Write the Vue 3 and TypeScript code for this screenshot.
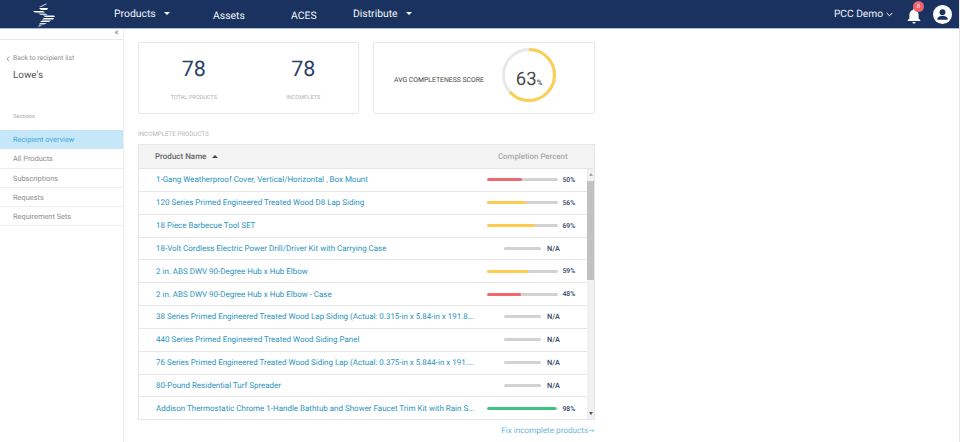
<script setup lang="ts">
interface Row { name: string; pct: number | null; color?: string }
const red = '#f0686f', yellow = '#fdcb4d', green = '#3fc380'
const rows: Row[] = [
  { name: '1-Gang Weatherproof Cover, Vertical/Horizontal , Box Mount', pct: 50, color: red },
  { name: '120 Series Primed Engineered Treated Wood D8 Lap Siding', pct: 56, color: yellow },
  { name: '18 Piece Barbecue Tool SET', pct: 69, color: yellow },
  { name: '18-Volt Cordless Electric Power Drill/Driver Kit with Carrying Case', pct: null },
  { name: '2 in. ABS DWV 90-Degree Hub x Hub Elbow', pct: 59, color: yellow },
  { name: '2 in. ABS DWV 90-Degree Hub x Hub Elbow - Case', pct: 48, color: red },
  { name: '38 Series Primed Engineered Treated Wood Lap Siding (Actual: 0.315-in x 5.84-in x 191.8...', pct: null },
  { name: '440 Series Primed Engineered Treated Wood Siding Panel', pct: null },
  { name: '76 Series Primed Engineered Treated Wood Siding Lap (Actual: 0.375-in x 5.844-in x 191....', pct: null },
  { name: '80-Pound Residential Turf Spreader', pct: null },
  { name: 'Addison Thermostatic Chrome 1-Handle Bathtub and Shower Faucet Trim Kit with Rain S...', pct: 98, color: green },
]
const sections = ['Recipient overview', 'All Products', 'Subscriptions', 'Requests', 'Requirement Sets']
const r = 25.5
const circ = 2 * Math.PI * r
</script>

<template>
  <div class="page">
    <header class="topbar">
      <div class="logo">
        <svg width="24" height="26" viewBox="0 0 24 26">
          <g fill="#fff">
            <path d="M14 2.500 15 3 9 6 7 6Z" opacity=".85"/>
            <path d="M7 7h9l-1 2H9Z"/>
            <path d="M1 10h10l2 1.500H3Z"/>
            <path d="M6 12.500h7l3 1.500H9Z" opacity=".8"/>
            <path d="M11 14.500h11l1 1.500H13Z"/>
            <path d="M12 17h10l-1 1.500H10Z"/>
            <path d="M10 19.500h9l-2 1.500H8Z"/>
            <path d="M8 22h7l-3 1.500H7Z" opacity=".85"/>
            <path d="M7 24.300h3L8 25.500H6Z" opacity=".8"/>
          </g>
        </svg>
      </div>
      <nav class="nav">
        <a class="nav-item products">Products <i class="caret"></i></a>
        <a class="nav-item low assets">Assets</a>
        <a class="nav-item low aces">ACES</a>
        <a class="nav-item distribute">Distribute <i class="caret"></i></a>
      </nav>
      <div class="right">
        <span class="account">PCC Demo
          <svg width="7" height="5" viewBox="0 0 7 5"><path d="M.7 1 3.500 3.800 6.300 1" fill="none" stroke="#fff" stroke-width="1"/></svg>
        </span>
        <span class="bell">
          <svg width="14" height="17" viewBox="0 0 14 17"><path fill="#fff" d="M7 1.500a1 1 0 0 1 1 1v.6c2.300.5 3.600 2.400 3.600 4.700v3.700L13.300 13.200v.8H.7v-.8l1.700-1.700V7.800c0-2.300 1.300-4.200 3.600-4.700v-.6a1 1 0 0 1 1-1ZM5.400 15h3.200a1.600 1.600 0 0 1-3.200 0Z"/></svg>
          <b class="badge">8</b>
        </span>
        <span class="avatar">
          <svg width="19" height="19" viewBox="0 0 24 24"><circle cx="12" cy="12" r="12" fill="#fff"/><circle cx="12" cy="9" r="3.700" fill="#19325f"/><path fill="#19325f" d="M5.500 17.500c0-2.600 4.300-3.900 6.500-3.900s6.500 1.300 6.500 3.900v1H5.500Z"/></svg>
        </span>
      </div>
    </header>

    <div class="body">
      <aside class="sidebar">
        <div class="collapse">«</div>
        <a class="back"><svg width="4" height="6" viewBox="0 0 4 6"><path d="M3.300.6 1 3l2.300 2.400" fill="none" stroke="#888" stroke-width=".8"/></svg>Back to recipient list</a>
        <h1 class="title">Lowe's</h1>
        <div class="sec-label">Sections</div>
        <ul class="menu">
          <li v-for="(s, i) in sections" :key="s" :class="{ active: i === 0 }">{{ s }}</li>
        </ul>
      </aside>

      <main class="main">
        <section class="cards">
          <div class="card stats">
            <div class="stat">
              <div class="num">78</div>
              <div class="cap">TOTAL PRODUCTS</div>
            </div>
            <div class="stat">
              <div class="num">78</div>
              <div class="cap">INCOMPLETE</div>
            </div>
          </div>
          <div class="card score">
            <span class="score-label">AVG COMPLETENESS SCORE</span>
            <div class="ring">
              <svg width="54" height="54" viewBox="0 0 54 54">
                <circle cx="27" cy="27" :r="r" fill="none" stroke="#e8e8e8" stroke-width="3"/>
                <circle cx="27" cy="27" :r="r" fill="none" stroke="#fdcf50" stroke-width="3"
                  :stroke-dasharray="`${circ * 0.63} ${circ}`" transform="rotate(-90 27 27)"/>
              </svg>
              <span class="ring-text">63<small>%</small></span>
            </div>
          </div>
        </section>

        <h2 class="tbl-title">INCOMPLETE PRODUCTS</h2>

        <section class="table">
          <div class="thead">
            <div class="th-name">Product Name <i class="sort"></i></div>
            <div class="th-pct">Completion Percent</div>
          </div>
          <div class="tbody">
            <div class="rows">
              <div v-for="row in rows" :key="row.name" class="row">
                <a class="name">{{ row.name }}</a>
                <div class="pct">
                  <template v-if="row.pct !== null">
                    <div class="bar"><div class="fill" :style="{ width: row.pct + '%', background: row.color }"></div></div>
                    <span class="val">{{ row.pct }}%</span>
                  </template>
                  <template v-else>
                    <div class="bar short"></div>
                    <span class="val na">N/A</span>
                  </template>
                </div>
              </div>
            </div>
            <div class="scroll">
              <i class="arrow up"></i>
              <div class="thumb"></div>
              <i class="arrow down"></i>
            </div>
          </div>
        </section>

        <div class="fix"><a>Fix incomplete products<span class="fix-arrow">→</span></a></div>
      </main>
    </div>
  </div>
</template>

<style>
html, body { margin: 0; background: #fff; }
</style>

<style scoped>
.page {
  width: 960px;
  height: 442px;
  overflow: hidden;
  display: flex;
  flex-direction: column;
  font-family: Roboto, "Liberation Sans", sans-serif;
  text-rendering: geometricPrecision;
  color: #333;
  box-sizing: border-box;
  border-right: 1px solid #e6e6e6;
}
.topbar {
  flex: 0 0 29px;
  height: 29px;
  box-sizing: border-box;
  background: #19325f;
  border-bottom: 1px solid #a9bcd8;
  display: flex;
  align-items: center;
  color: #fff;
}
.logo { width: 114px; padding-left: 32px; box-sizing: border-box; display: flex; height: 28px; align-items: center; }
.nav { display: flex; align-items: center; font-size: 10.400px; }
.nav-item { color: #f2f4f8; white-space: nowrap; display: flex; align-items: center; position: relative; top: -1px; }
.nav-item.low { top: 1px; }
.products { width: 99px; }
.assets { width: 78px; }
.aces { width: 62px; }
.caret { display: inline-block; margin-left: 8px; border-left: 3.500px solid transparent; border-right: 3.500px solid transparent; border-top: 3.500px solid #fff; }
.right { margin-left: auto; display: flex; align-items: center; padding-right: 7px; }
.account { font-size: 10.200px; display: flex; align-items: center; gap: 3px; color: #eef1f6; }
.bell { margin-left: 13.500px; position: relative; width: 14px; height: 17px; display: block; top: 1px; }
.badge { position: absolute; top: -6px; left: 6.500px; width: 11px; height: 11px; border-radius: 50%; background: #f0636b; color: #fde; font-size: 6px; font-weight: 400; display: flex; align-items: center; justify-content: center; }
.avatar { margin-left: 12.500px; display: block; height: 19px; }

.body { flex: 1; display: flex; min-height: 0; }
.sidebar { width: 124px; flex: none; box-sizing: border-box; border-right: 1px solid #ececec; }
.collapse { height: 10px; border-bottom: 1px solid #e8e8e8; text-align: right; padding-right: 4px; font-size: 10px; line-height: 8px; color: #8a8a8a; }
.back { display: flex; align-items: center; gap: 3px; margin: 14px 0 0 6px; font-size: 6.800px; line-height: 9px; color: #8d8d8d; }
.title { margin: 6px 0 0 13px; font-size: 9.900px; line-height: 14px; font-weight: 400; color: #555; }
.sec-label { margin: 30px 0 0 13px; font-size: 5.700px; line-height: 8px; color: #aaa; }
.menu { list-style: none; padding: 0; margin: 9px 0 0; }
.menu li { height: 19.250px; box-sizing: border-box; line-height: 19px; padding-left: 13px; font-size: 7.400px; color: #8e8e8e; border-bottom: 1.500px solid #eee; }
.menu li.active { background: #c5e7f8; color: #45a7d6; border-bottom: 0; line-height: 19.500px; }

.main { width: 457px; margin-left: 14px; padding-top: 13px; flex: none; }
.cards { display: flex; gap: 14px; }
.card { height: 72px; width: 221.500px; flex: none; box-sizing: border-box; border: 1px solid #e7e7e7; border-radius: 2px; display: flex; }
.card.stats { width: 221px; }
.stat { width: 110px; text-align: center; }
.num { font-size: 21.500px; line-height: 26px; margin-top: 14px; color: #2a3f66; }
.cap { font-size: 5.600px; line-height: 8px; margin-top: 11px; color: #b2b2b2; }
.score { align-items: center; padding-left: 20px; }
.score-label { font-size: 6.850px; color: #444; white-space: nowrap; width: 108px; margin-top: 3px; }
.ring { position: relative; width: 54px; height: 54px; margin-bottom: 7px; }
.ring-text { position: absolute; left: 0; right: 0; top: 20px; text-align: center; font-size: 18.500px; line-height: 22px; color: #4a4a4a; }
.ring-text small { font-size: 7.500px; font-weight: 500; }

.tbl-title { margin: 16px 0 0; font-size: 6.200px; line-height: 8px; font-weight: 400; color: #b5b5b5; }
.table { margin-top: 6px; border: 1px solid #e6e6e6; border-top: 1px solid #e8e8e8; box-sizing: border-box; }
.thead { height: 23px; background: #f3f3f3; display: flex; align-items: center; border-bottom: 1px solid #e4e4e4; }
.th-name { width: 335px; padding-left: 16px; box-sizing: border-box; font-size: 8px; font-weight: 500; color: #666; display: flex; align-items: center; }
.sort { margin-left: 6px; border-left: 3px solid transparent; border-right: 3px solid transparent; border-bottom: 3px solid #444; }
.th-pct { width: 120px; padding-left: 24px; box-sizing: border-box; font-size: 7.850px; font-weight: 500; color: #aaa; white-space: nowrap; }
.tbody { display: flex; height: 250px; overflow: hidden; }
.rows { width: 448px; flex: none; }
.row { height: 22.850px; box-sizing: border-box; display: flex; align-items: center; border-bottom: 1px solid #e6e6e6; }
.row:last-child { border-bottom: 0; }
.name { width: 336px; flex: none; padding-left: 17px; box-sizing: border-box; font-size: 7.980px; color: #2b93bb; white-space: nowrap; overflow: hidden; }
.pct { flex: 1; display: flex; align-items: center; justify-content: center; }
.bar { width: 71px; height: 3px; background: #d2d2d2; border-radius: 1.500px; overflow: hidden; }
.bar.short { width: 37px; }
.fill { height: 100%; border-radius: 1.500px; }
.val { margin-left: 5px; font-size: 6.800px; font-weight: 500; color: #2c3f66; width: 13px; white-space: nowrap; }
.val.na { width: 11px; font-size: 7.300px; margin-left: 6px; }
.scroll { flex: 1; background: #f1f1f1; position: relative; }
.thumb { position: absolute; top: 12px; left: 0; right: 0; height: 99px; background: #c1c1c1; }
.arrow { position: absolute; left: 2px; border-left: 2.500px solid transparent; border-right: 2.500px solid transparent; }
.arrow.up { top: 4px; border-bottom: 3px solid #a3a3a3; }
.arrow.down { bottom: 4px; border-top: 3px solid #505050; }
.fix { text-align: right; margin-top: 5px; padding-right: 1px; font-size: 8.150px; line-height: 11px; color: #6db5dc; }
.fix-arrow { font-family: "DejaVu Sans", sans-serif; font-size: 7px; }
</style>
